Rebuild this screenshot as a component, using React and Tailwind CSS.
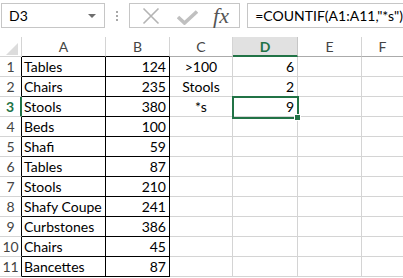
import React from "react";

const rows = [
  ["Tables", 124, ">100", 6],
  ["Chairs", 235, "Stools", 2],
  ["Stools", 380, "*s", 9],
  ["Beds", 100],
  ["Shafi", 59],
  ["Tables", 87],
  ["Stools", 210],
  ["Shafy Coupe", 241],
  ["Curbstones", 386],
  ["Chairs", 45],
  ["Bancettes", 87],
];

function Toolbar() {
  return (
    <div className="h-[37px] flex items-start pt-[3px]">
      <div className="ml-[1px] w-[105px] h-[25px] border border-[#c6c6c6] flex items-center justify-between pl-[7px] pr-[8px] text-[14px] text-black">
        <span>D3</span>
        <svg width="8" height="4" viewBox="0 0 8 4">
          <polygon points="0,0 8,0 4,4" fill="#6e6e6e" />
        </svg>
      </div>
      <div className="w-[25px] h-[25px] flex flex-col items-center justify-center gap-[2px]">
        <div className="w-[2px] h-[2px] bg-[#a8a8a8]" />
        <div className="w-[2px] h-[2px] bg-[#a8a8a8]" />
        <div className="w-[2px] h-[2px] bg-[#a8a8a8]" />
      </div>
      <div className="w-[113px] h-[25px] border border-[#c6c6c6] flex items-center">
        <svg className="ml-[12px]" width="18" height="18" viewBox="0 0 18 18">
          <path d="M1.5 1.5 L16.5 16.5 M16.5 1.5 L1.5 16.5" stroke="#b4b4b4" strokeWidth="1.6" fill="none" />
        </svg>
        <svg className="ml-[17px] mt-[3px]" width="21" height="15" viewBox="0 0 21 15">
          <path d="M1 7 L7.5 13 L20 1.5" stroke="#c0c0c0" strokeWidth="3.6" fill="none" />
        </svg>
        <span className="ml-[15px] text-[22px] leading-none italic text-[#555] font-['Liberation_Serif',serif]">
          fx
        </span>
      </div>
      <div className="ml-[7px] flex-1 h-[25px] border-y border-l border-[#c6c6c6] flex items-center pl-[7px] text-[14px] text-black whitespace-nowrap">
        =COUNTIF(A1:A11,"*s")
      </div>
    </div>
  );
}

function HeaderRow() {
  const cols = [
    { l: "A", w: "w-[84px]", b: "border-b-black" },
    { l: "B", w: "w-[64px]", b: "border-b-black" },
    { l: "C", w: "w-[63px]", b: "border-b-[#ababab]" },
  ];
  return (
    <div className="flex h-[20px] text-[14px] text-[#444]">
      <div className="w-[22px] shrink-0 border-r border-b border-[#d4d4d4] flex items-end justify-end pr-[3px] pb-[1px]">
        <svg width="12" height="12" viewBox="0 0 12 12">
          <polygon points="12,0 12,12 0,12" fill="#dcdcdc" />
        </svg>
      </div>
      {cols.map((c) => (
        <div
          key={c.l}
          className={`${c.w} shrink-0 border-r border-r-[#d4d4d4] border-b ${c.b} flex items-center justify-center`}
        >
          {c.l}
        </div>
      ))}
      <div className="w-[65px] shrink-0 bg-[#e1e1e1] border-r border-r-[#c6c6c6] border-b-2 border-b-[#217346] flex items-center justify-center font-bold text-[#217346]">
        D
      </div>
      <div className="w-[64px] shrink-0 border-r border-r-[#d4d4d4] border-b border-b-[#ababab] flex items-center justify-center">
        E
      </div>
      <div className="flex-1 border-b border-b-[#ababab] flex items-center justify-center">
        F
      </div>
    </div>
  );
}

function DataRow({ n, row }) {
  const [a, b, c, d] = row;
  const sel = n === 3;
  return (
    <div className="flex h-[20px] text-[14px]">
      <div
        className={
          sel
            ? "w-[22px] shrink-0 border-r-2 border-r-[#217346] border-b border-b-[#d4d4d4] flex items-center justify-center font-bold text-[#217346]"
            : "w-[22px] shrink-0 border-r border-r-black border-b border-b-[#d4d4d4] flex items-center justify-center text-[#444]"
        }
      >
        {n}
      </div>
      <div className="w-[84px] shrink-0 border-r border-b border-black flex items-center pl-[2px] text-black whitespace-nowrap">
        {a}
      </div>
      <div className="w-[64px] shrink-0 border-r border-b border-black flex items-center justify-end pr-[3px] text-black">
        {b}
      </div>
      <div className="w-[63px] shrink-0 border-r border-b border-[#d4d4d4] flex items-center justify-center text-black">
        {c}
      </div>
      <div className="w-[65px] shrink-0 border-r border-b border-[#d4d4d4] flex items-center justify-end pr-[3px] text-black">
        {d}
      </div>
      <div className="w-[64px] shrink-0 border-r border-b border-[#d4d4d4]" />
      <div className="flex-1 border-b border-[#d4d4d4]" />
    </div>
  );
}

export default function App() {
  return (
    <div className="w-[403px] h-[278px] bg-white overflow-hidden relative font-['Lato',sans-serif]">
      <Toolbar />
      <HeaderRow />
      {rows.map((r, i) => (
        <DataRow key={i} n={i + 1} row={r} />
      ))}
      <div className="absolute left-[232px] top-[96px] w-[67px] h-[23px] border-2 border-[#217346]" />
      <div className="absolute left-[294px] top-[114px] w-[7px] h-[7px] bg-[#217346] border border-white" />
    </div>
  );
}
